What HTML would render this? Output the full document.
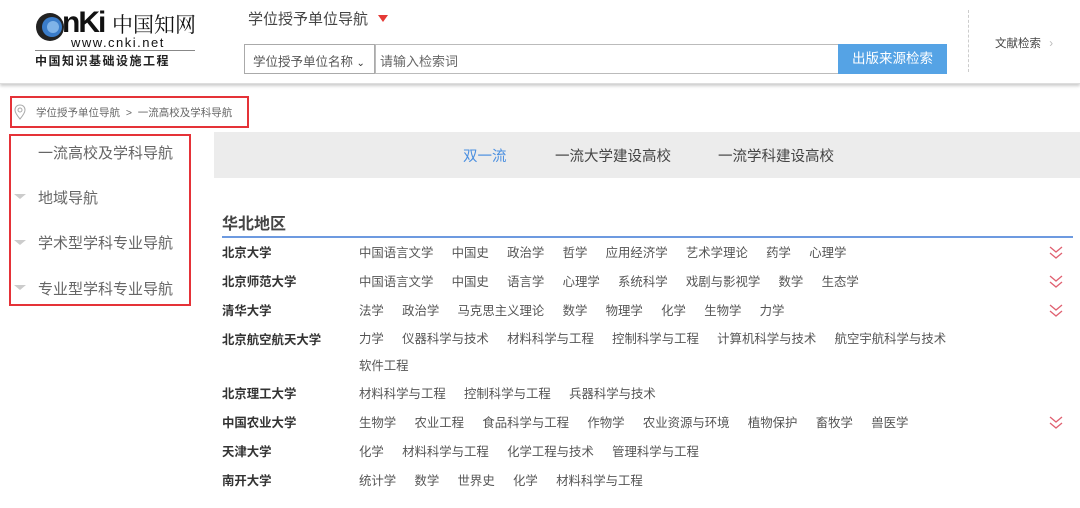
<!DOCTYPE html><html><head><meta charset="utf-8"><style>
*{margin:0;padding:0;box-sizing:border-box}
body{width:1080px;height:508px;background:#fff;font-family:"Liberation Sans","Noto Sans CJK SC",sans-serif;position:relative;overflow:hidden;color:#555}
.a{position:absolute;white-space:nowrap}
.hdr{position:absolute;left:0;top:0;width:1080px;height:84px;background:#fff;border-bottom:1px solid #ddd;box-shadow:0 2px 3px #ccc}
.row{position:absolute;left:222px;width:800px;font-size:12.4px;line-height:18px}
.row b{position:absolute;left:0;color:#333;font-weight:bold;white-space:nowrap}
.row span{position:absolute;left:137px;width:620px;white-space:normal}
.row i{font-style:normal;margin-right:18.3px;color:#555;white-space:nowrap;display:inline-block}
.chev{position:absolute;left:1049px;width:14px;height:14px}
</style></head><body>
<div class="hdr"></div>
<svg class="a" style="left:34px;top:10px" width="30" height="34"><circle cx="16" cy="17" r="14" fill="#222"/><circle cx="18" cy="17" r="10" fill="#3a7cc9"/><circle cx="19" cy="17" r="6" fill="#7fb3e8"/></svg>
<div class="a" style="left:62px;top:6px;font-size:30px;font-weight:bold;color:#111;letter-spacing:-2px;font-family:'Liberation Sans',sans-serif">nKi</div>
<div class="a" style="left:112px;top:9px;font-size:21px;color:#111;font-family:'Noto Serif CJK SC',serif">中国知网</div>
<div class="a" style="left:71px;top:35px;font-size:13px;color:#111;letter-spacing:1.5px">www.cnki.net</div>
<div class="a" style="left:35px;top:50px;width:160px;border-top:1px solid #888"></div>
<div class="a" style="left:35px;top:52px;font-size:12px;font-weight:bold;color:#222;letter-spacing:1.5px">中国知识基础设施工程</div>
<div class="a" style="left:248px;top:8px;font-size:15px;color:#444">学位授予单位导航</div>
<div class="a" style="left:378px;top:15px;width:0;height:0;border-left:5px solid transparent;border-right:5px solid transparent;border-top:7px solid #e53935"></div>
<div class="a" style="left:244px;top:44px;width:131px;height:30px;border:1px solid #aaa;font-size:12.5px;padding:6px 0 0 8px;color:#555">学位授予单位名称 <span style="font-size:10px;color:#333">&#8964;</span></div>
<div class="a" style="left:375px;top:44px;width:464px;height:30px;border:1px solid #bbb;font-size:13px;padding:6px 0 0 4px;color:#666">请输入检索词</div>
<div class="a" style="left:838px;top:44px;width:109px;height:30px;background:#55a3e5;color:#fff;font-size:13.5px;text-align:center;line-height:30px">出版来源检索</div>
<div class="a" style="left:968px;top:10px;height:62px;border-left:1px dashed #ccc"></div>
<div class="a" style="left:995px;top:35px;font-size:11.5px;color:#444">文献检索 <span style="color:#bbb;margin-left:5px">&#8250;</span></div>
<div class="a" style="left:10px;top:96px;width:239px;height:32px;border:2px solid #e53238"></div>
<svg class="a" style="left:14px;top:104px" width="12" height="16"><path d="M6 1C3 1 1 3 1 6c0 3 5 9 5 9s5-6 5-9c0-3-2-5-5-5z" fill="none" stroke="#aaa"/><circle cx="6" cy="6" r="2" fill="none" stroke="#aaa"/></svg>
<div class="a" style="left:36px;top:105px;font-size:10.5px;color:#666">学位授予单位导航 &nbsp;&gt;&nbsp; 一流高校及学科导航</div>
<div class="a" style="left:9px;top:134px;width:182px;height:172px;border:2px solid #e53238"></div>
<div class="a" style="left:38px;top:142px;font-size:15px;color:#666">一流高校及学科导航</div>
<div class="a" style="left:38px;top:187px;font-size:15px;color:#666">地域导航</div>
<div class="a" style="left:38px;top:232px;font-size:15px;color:#666">学术型学科专业导航</div>
<div class="a" style="left:38px;top:278px;font-size:15px;color:#666">专业型学科专业导航</div>
<div class="a" style="left:14px;top:194px;border-left:6px solid transparent;border-right:6px solid transparent;border-top:5px solid #ccc"></div>
<div class="a" style="left:14px;top:240px;border-left:6px solid transparent;border-right:6px solid transparent;border-top:5px solid #ccc"></div>
<div class="a" style="left:14px;top:285px;border-left:6px solid transparent;border-right:6px solid transparent;border-top:5px solid #ccc"></div>
<div class="a" style="left:214px;top:132px;width:866px;height:46px;background:#ececec"></div>
<div class="a" style="left:463px;top:145px;font-size:14.5px;color:#4a8fe0">双一流</div>
<div class="a" style="left:555px;top:145px;font-size:14.5px;color:#444">一流大学建设高校</div>
<div class="a" style="left:718px;top:145px;font-size:14.5px;color:#444">一流学科建设高校</div>
<div class="a" style="left:222px;top:210px;font-size:16px;font-weight:bold;color:#444">华北地区</div>
<div class="a" style="left:222px;top:236px;width:851px;height:2px;background:#6d9ae0"></div>
<div class="row" style="top:244px"><b>北京大学</b><span><i>中国语言文学</i><i>中国史</i><i>政治学</i><i>哲学</i><i>应用经济学</i><i>艺术学理论</i><i>药学</i><i>心理学</i></span></div>
<div class="row" style="top:273px"><b>北京师范大学</b><span><i>中国语言文学</i><i>中国史</i><i>语言学</i><i>心理学</i><i>系统科学</i><i>戏剧与影视学</i><i>数学</i><i>生态学</i></span></div>
<div class="row" style="top:302px"><b>清华大学</b><span><i>法学</i><i>政治学</i><i>马克思主义理论</i><i>数学</i><i>物理学</i><i>化学</i><i>生物学</i><i>力学</i></span></div>
<div class="row" style="top:331px"><b>北京航空航天大学</b><span style="line-height:27px;top:-5px"><i>力学</i><i>仪器科学与技术</i><i>材料科学与工程</i><i>控制科学与工程</i><i>计算机科学与技术</i><i>航空宇航科学与技术</i><i>软件工程</i></span></div>
<div class="row" style="top:385px"><b>北京理工大学</b><span><i>材料科学与工程</i><i>控制科学与工程</i><i>兵器科学与技术</i></span></div>
<div class="row" style="top:414px"><b>中国农业大学</b><span><i>生物学</i><i>农业工程</i><i>食品科学与工程</i><i>作物学</i><i>农业资源与环境</i><i>植物保护</i><i>畜牧学</i><i>兽医学</i></span></div>
<div class="row" style="top:443px"><b>天津大学</b><span><i>化学</i><i>材料科学与工程</i><i>化学工程与技术</i><i>管理科学与工程</i></span></div>
<div class="row" style="top:472px"><b>南开大学</b><span><i>统计学</i><i>数学</i><i>世界史</i><i>化学</i><i>材料科学与工程</i></span></div>
<svg class="chev" style="top:246px"><path d="M1 1l6 5 6-5M1 7l6 5 6-5" fill="none" stroke="#e06070" stroke-width="1.3"/></svg>
<svg class="chev" style="top:275px"><path d="M1 1l6 5 6-5M1 7l6 5 6-5" fill="none" stroke="#e06070" stroke-width="1.3"/></svg>
<svg class="chev" style="top:304px"><path d="M1 1l6 5 6-5M1 7l6 5 6-5" fill="none" stroke="#e06070" stroke-width="1.3"/></svg>
<svg class="chev" style="top:416px"><path d="M1 1l6 5 6-5M1 7l6 5 6-5" fill="none" stroke="#e06070" stroke-width="1.3"/></svg>
</body></html>
